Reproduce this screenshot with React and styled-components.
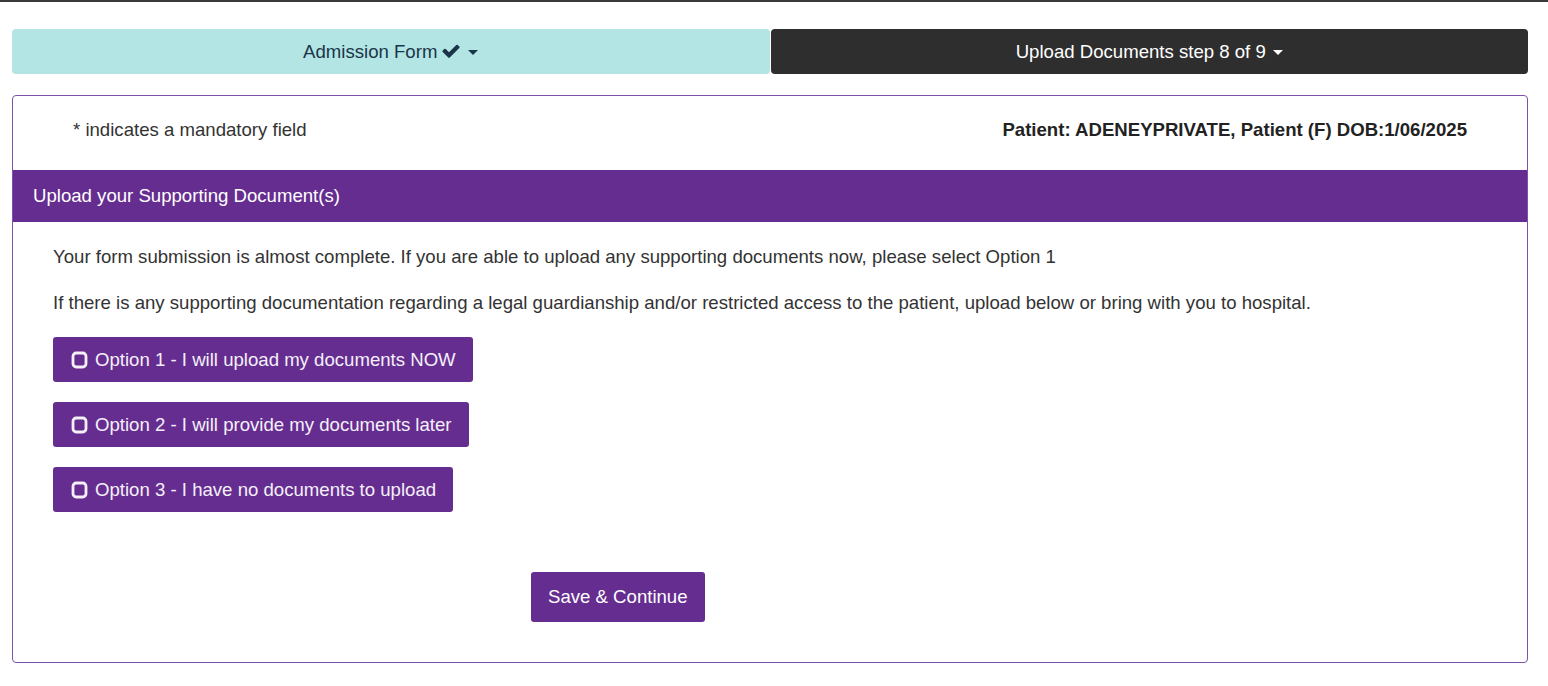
import React from 'react';
import styled, { createGlobalStyle } from 'styled-components';

const GlobalStyle = createGlobalStyle`
  html, body {
    margin: 0;
    padding: 0;
    background: #fff;
  }
  body {
    font-family: "Liberation Sans", Arial, sans-serif;
    font-size: 18.6px;
    color: #333;
  }
`;

const Page = styled.div`
  border-top: 2px solid #3a3a3a;
  padding: 27px 20px 20px 12px;
`;

const Steps = styled.div`
  display: flex;
  gap: 1px;
  margin-bottom: 21px;
`;

const StepTab = styled.div`
  flex: 1;
  height: 45px;
  display: flex;
  align-items: center;
  justify-content: center;
  gap: 4px;
  border-radius: 4px;
  font-size: 18.6px;
  padding-top: 1px;
  box-sizing: border-box;
  background: ${p => (p.$active ? '#2f2e2e' : '#b3e5e4')};
  color: ${p => (p.$active ? '#fff' : '#1b3548')};
`;

const Caret = styled.span`
  display: inline-block;
  width: 0;
  height: 0;
  margin-left: 3px;
  border-left: 5px solid transparent;
  border-right: 5px solid transparent;
  border-top: 5px solid currentColor;
`;

const Panel = styled.div`
  border: 1px solid #7d52a8;
  border-radius: 4px;
  height: 568px;
  box-sizing: border-box;
`;

const InfoRow = styled.div`
  display: flex;
  justify-content: space-between;
  align-items: center;
  height: 74px;
  padding: 0 60px 7px 60px;
  box-sizing: border-box;
`;

const Patient = styled.div`
  font-weight: bold;
  color: #222;
`;

const SectionHeader = styled.div`
  background: #662d91;
  color: #fff;
  height: 52px;
  display: flex;
  align-items: center;
  padding-left: 20px;
`;

const Body = styled.div`
  padding: 24px 40px 0 40px;
`;

const Para = styled.p`
  margin: 0 0 24px 0;
  line-height: 22px;
  color: #333;
`;

const Options = styled.div`
  display: flex;
  flex-direction: column;
  align-items: flex-start;
  gap: 20px;
  margin-top: -1px;
`;

const OptionButton = styled.button`
  display: flex;
  align-items: center;
  gap: 7px;
  height: 45px;
  padding: 0 17px 0 18px;
  border: none;
  border-radius: 3px;
  background: #662d91;
  color: #f4f0f8;
  font-family: "Liberation Sans", Arial, sans-serif;
  font-size: 18.6px;
  cursor: pointer;
`;

const Actions = styled.div`
  padding: 60px 0 0 478px;
`;

const SaveButton = styled.button`
  height: 50px;
  padding: 0 17px;
  border: none;
  border-radius: 3px;
  background: #662d91;
  color: #fff;
  font-family: "Liberation Sans", Arial, sans-serif;
  font-size: 18.6px;
  cursor: pointer;
`;

const CheckIcon = () => (
  <svg width="20" height="17" viewBox="0 0 1792 1536" aria-hidden="true">
    <path
      fill="currentColor"
      d="M1671 298q0 40-28 68l-724 724-136 136q-28 28-68 28t-68-28l-136-136-362-362q-28-28-28-68t28-68l136-136q28-28 68-28t68 28l294 295 656-657q28-28 68-28t68 28l136 136q28 28 28 68z"
    />
  </svg>
);

const SquareIcon = () => (
  <svg width="17" height="18" viewBox="0 0 17 18" aria-hidden="true">
    <rect x="2" y="2" width="13" height="14" rx="3.2" fill="none" stroke="currentColor" strokeWidth="2.8" />
  </svg>
);

const options = [
  'Option 1 - I will upload my documents NOW',
  'Option 2 - I will provide my documents later',
  'Option 3 - I have no documents to upload',
];

export default function App() {
  return (
    <>
      <GlobalStyle />
      <Page>
        <Steps>
          <StepTab>
            Admission Form <CheckIcon /><Caret />
          </StepTab>
          <StepTab $active>
            Upload Documents step 8 of 9 <Caret />
          </StepTab>
        </Steps>
        <Panel>
          <InfoRow>
            <span>* indicates a mandatory field</span>
            <Patient>Patient: ADENEYPRIVATE, Patient (F) DOB:1/06/2025</Patient>
          </InfoRow>
          <SectionHeader>Upload your Supporting Document(s)</SectionHeader>
          <Body>
            <Para>
              Your form submission is almost complete. If you are able to upload any supporting documents now, please select Option 1
            </Para>
            <Para>
              If there is any supporting documentation regarding a legal guardianship and/or restricted access to the patient, upload below or bring with you to hospital.
            </Para>
            <Options>
              {options.map(label => (
                <OptionButton key={label}>
                  <SquareIcon />
                  {label}
                </OptionButton>
              ))}
            </Options>
            <Actions>
              <SaveButton>Save &amp; Continue</SaveButton>
            </Actions>
          </Body>
        </Panel>
      </Page>
    </>
  );
}
